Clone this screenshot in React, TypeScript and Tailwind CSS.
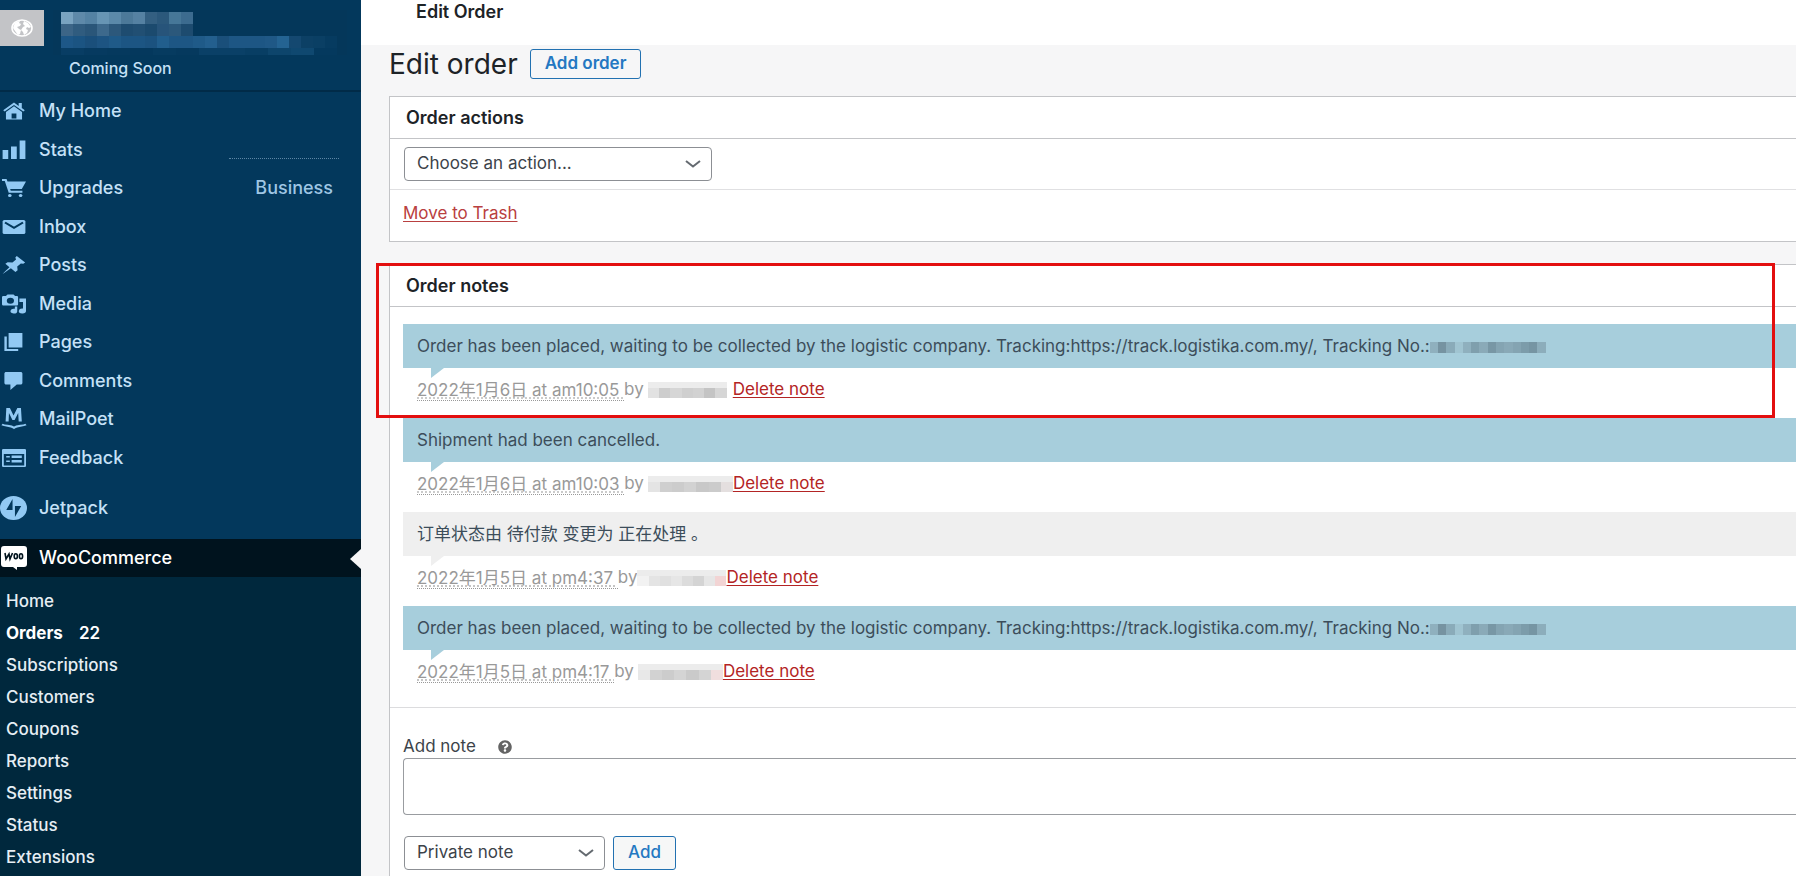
import { FaQuestionCircle } from "react-icons/fa";
import type { ReactNode } from "react";

type MenuEntry = { label: string; icon: ReactNode };

type Note = {
  id: number;
  text: string;
  trackingNo?: boolean;
  system?: boolean;
  date: string;
  author: string[];
  authorClass: string;
};

const menu: MenuEntry[] = [
  {
    label: "My Home",
    icon: (
      <>
        <path d="M10 1.5 1 9.2l1.2 1.4L10 4l7.8 6.6L19 9.2l-2.5-2.1V2h-2.6v2.9z" />
        <path d="M10 5.300 3.300 11v7.500h13.400V11zm-2 12.200v-5h4v5z" fillRule="evenodd" />
      </>
    ),
  },
  {
    label: "Stats",
    icon: <path d="M.5 10h4.700v9H.5zm7-3.500h4.800V19H7.500zm7.200-6h4.800V19h-4.800z" />,
  },
  {
    label: "Upgrades",
    icon: (
      <>
        <path d="M0 1h3.800l.8 2.500H20L16.500 11H6.800l.5 1.800h9.700v2H5.600L2.300 3H0z" />
        <circle cx="6.500" cy="17.500" r="1.500" />
        <circle cx="15.500" cy="17.500" r="1.500" />
      </>
    ),
  },
  {
    label: "Inbox",
    icon: (
      <>
        <rect x=".5" y="3" width="19" height="14" rx="1.500" />
        <path d="m2.500 5.500 7.500 5.300 7.500-5.300" fill="none" stroke="#03385c" strokeWidth="1.800" />
      </>
    ),
  },
  {
    label: "Posts",
    icon: (
      <path d="m12.300 1 7 6.500-1.600 1.300-2-.2-3 3 .3 3.700-1.800 1.700-3.800-3.700C5 15.300 2.500 17.600.5 19c1.400-2 3.700-4.600 5.700-6.800L2.800 8.800l1.900-1.600 4 .2 3-2.900-.6-2z" />
    ),
  },
  {
    label: "Media",
    icon: (
      <>
        <path
          d="M1.300 2h2L4.600.5h5L10.900 2h1.300c.7 0 1.200.5 1.200 1.200v7c0 .7-.5 1.300-1.200 1.300H1.300C.6 11.500 0 11 0 10.200v-7C0 2.500.6 2 1.300 2zM7 3.700a3 3 0 1 0 0 6 3 3 0 0 0 0-6z"
          fillRule="evenodd"
        />
        <path d="M14.500 4.500H20V17a3 2.500 0 1 1-2.500-2.500V8h-3z" />
        <path d="M12.700 12.500v4.700a2.800 2.400 0 1 1-2-2.400v-2.300z" />
      </>
    ),
  },
  {
    label: "Pages",
    icon: <path d="M5.500 1H17v14.500H5.500zM2 4.500h2v12.500H13.500V19H2z" />,
  },
  {
    label: "Comments",
    icon: <path d="M3.500 1h12C16.400 1 17 1.600 17 2.500v9.500c0 .9-.6 1.500-1.500 1.500h-3.200L7 19v-5.500H3.500C2.600 13.500 2 12.900 2 12V2.500C2 1.600 2.600 1 3.500 1z" />,
  },
  {
    label: "MailPoet",
    icon: (
      <>
        <path d="M3 12.500 3.600-1h3l3 7.500 3.200-7.500h3l.7 13.500h-2.600l-.4-8.500-3 7h-1.800l-2.900-7-.3 8.500z" />
        <path d="M0 15.500c3.500 2 7 .3 10 3.300 3-3 6.500-1.300 10-3.300" fill="none" stroke="currentColor" strokeWidth="2" />
      </>
    ),
  },
  {
    label: "Feedback",
    icon: (
      <>
        <rect x="0" y="1" width="20" height="18" rx="1" />
        <path d="M1.500 6h17v11.500h-17z" fill="#03385c" />
        <path d="M3.500 8h3v1.500h-3zm0 4.500h3V14h-3zM8 7.500h8.500V10H8zm0 4.500h8.500v2.500H8z" />
      </>
    ),
  },
];

const submenu = ["Home", "Orders", "Subscriptions", "Customers", "Coupons", "Reports", "Settings", "Status", "Extensions"];

const placed =
  "Order has been placed, waiting to be collected by the logistic company. Tracking:https://track.logistika.com.my/, Tracking No.:";

const notes: Note[] = [
  {
    id: 1,
    text: placed,
    trackingNo: true,
    date: "2022年1月6日 at am10:05 ",
    author: ["#e2e2e2", "#cdcdcd", "#d6d6d6", "#cfcfcf", "#d2d2d2", "#c4c4c4", "#d6d6d6"],
    authorClass: "ml-1 mr-[6px] w-[79px]",
  },
  {
    id: 2,
    text: "Shipment had been cancelled.",
    date: "2022年1月6日 at am10:03 ",
    author: ["#e4e4e4", "#cfcfcf", "#cccccc", "#d2d2d2", "#c8c8c8", "#cbcbcb", "#e4dfdf"],
    authorClass: "ml-1 w-[85px]",
  },
  {
    id: 3,
    text: "订单状态由 待付款 变更为 正在处理 。",
    system: true,
    date: "2022年1月5日 at pm4:37 ",
    author: ["#f2f2f2", "#e4e4e4", "#e0e0e0", "#e6e6e6", "#dcdcdc", "#d4d4d4", "#e6e6e6", "#f2d4d4"],
    authorClass: "w-[89px]",
  },
  {
    id: 4,
    text: placed,
    trackingNo: true,
    date: "2022年1月5日 at pm4:17 ",
    author: ["#e8e8e8", "#d2d2d2", "#cccccc", "#d4d4d4", "#cacaca", "#d4d4d4", "#f0dede"],
    authorClass: "ml-1 w-[85px]",
  },
];

// pixelated placeholders for redacted text
const siteName = ["#79a3c0", "#5e89a9", "#5482a3", "#6795b4", "#5b89a9", "#4c7999", "#5581a2", "#335f81", "#2b587b", "#467798", "#3c6b8f"];
const siteNameLower = ["#3c6587", "#305c7f", "#2a5679", "#3d698c", "#2c587b", "#1e4c70", "#214f73", "#1b4a6e", "#27547a", "#2b587b", "#1d4b6f"];
const siteUrl = ["#1d5787", "#1b5482", "#1a4f7b", "#1d5482", "#1f5a88", "#1c5583", "#1c5583", "#1b527f", "#215e8d", "#1d5684", "#1d5684", "#1f5a88", "#235f8e", "#1a4f7a", "#1d5684", "#1d5684", "#1d5684", "#1f5886", "#246392", "#144870", "#0c4065", "#0a3f64", "#063b60"];
const siteUrlLower = ["#083d64", "#063a60", "#05395e", "#04385d", "#063b60", "#05395e", "#0a4067", "#0a4067", "#083e64", "#0d456c", "#0f4870", "#04395e"];
const trackingDigits = ["#8fb0be", "#7693a1", "#8aabb9", "#a0c4d1", "#8fb0be", "#7f9fad", "#8aaab8", "#7897a5", "#84a4b2", "#89a9b7", "#84a4b2", "#7c9caa", "#7695a3", "#8cadbb"];

function Mosaic({ colors, className }: { colors: string[]; className: string }) {
  return (
    <span aria-hidden="true" className={`flex ${className}`}>
      {colors.map((color, i) => (
        <span key={i} className="flex-1" style={{ backgroundColor: color }} />
      ))}
    </span>
  );
}

function MenuIcon({ children }: { children: ReactNode }) {
  return (
    <svg viewBox="0 0 20 20" preserveAspectRatio="none" fill="currentColor" className="h-5 w-6 shrink-0 overflow-visible text-[#92c9f3]">
      {children}
    </svg>
  );
}

function Chevron() {
  return (
    <svg viewBox="0 0 16 10" fill="none" stroke="currentColor" strokeWidth="2" className="pointer-events-none absolute right-[11px] h-[10px] w-4 text-[#646a70]">
      <path d="m1 2 7 5.500L15 2" />
    </svg>
  );
}

function Sidebar() {
  return (
    <aside className="w-[361px] shrink-0 bg-[#03385c] text-lg font-medium text-[#c5e1f7]">
      <div className="h-[92px] border-b-2 border-[#012b48] pt-[10px]">
        <div className="flex gap-[9px]">
          <div className="flex h-9 w-11 items-center justify-center bg-[#c3c4c7]">
            <svg viewBox="0 0 22 18" preserveAspectRatio="none" className="h-[18px] w-[22px]">
              <ellipse cx="11" cy="9" rx="10" ry="8" fill="#c3c4c7" stroke="#fff" strokeWidth="1.600" />
              <path d="M3 6c1-3 4-4 6-4l-1 2 2 1-1 2-3 1 2 2 2 1-1 4-2 1-3-4-2-3zM13 2l4 2 3 4-2 1-2-1-1 2 2 1-1 3-3 2-1-3-2-2 2-3 2-1-2-2z" fill="#fff" />
            </svg>
          </div>
          <div className="h-[45px] w-[294px] bg-[#04375a] pt-[2px] pl-2">
            <Mosaic colors={siteName} className="h-3 w-[132px]" />
            <Mosaic colors={siteNameLower} className="h-3 w-[132px]" />
            <Mosaic colors={siteUrl} className="h-3 w-[276px]" />
            <Mosaic colors={siteUrlLower} className="h-[7px] w-[276px]" />
          </div>
        </div>
        <p className="mt-[3px] ml-[69px] text-base leading-5">Coming Soon</p>
      </div>

      <nav>
        <ul className="flex h-[385px] flex-col">
          {menu.map((item) => (
            <li key={item.label} className="flex-1">
              <a href="#" className="flex h-full items-center gap-[13px] pl-[2px]">
                <MenuIcon>{item.icon}</MenuIcon>
                {item.label}
                {item.label === "Upgrades" && (
                  <span className="relative mr-7 ml-auto text-[#9fc6e4]">
                    Business
                    <span className="absolute -top-4 -right-[6px] w-[110px] border-t border-dotted border-[#5d86a5]" />
                  </span>
                )}
              </a>
            </li>
          ))}
        </ul>
        <a href="#" className="my-3 flex h-[38px] items-center gap-3">
          <svg viewBox="0 0 28 24" preserveAspectRatio="none" className="h-6 w-[27px]">
            <ellipse cx="14" cy="12" rx="14" ry="12" fill="#92c9f3" />
            <path d="M13 3v11H6.500zM15.500 21V10h6.500z" fill="#03385c" />
          </svg>
          Jetpack
        </a>
        <a href="#" className="relative flex h-[38px] items-center gap-3 bg-[#00131e] text-white">
          <svg viewBox="0 0 27 24" className="h-6 w-[27px]">
            <path d="M4 0h20c2 0 3 1 3 3v15c0 2-1 3-3 3h-7v3l-4-3H4c-2 0-3-1-3-3V3c0-2 1-3 3-3z" fill="#fff" />
            <path d="m5 7 1 6 3-5 1 5 2.500-6" fill="none" stroke="#00131e" strokeWidth="1.600" />
            <ellipse cx="15.800" cy="10.300" rx="1.600" ry="2.500" fill="none" stroke="#00131e" strokeWidth="1.600" />
            <ellipse cx="21" cy="10.300" rx="1.600" ry="2.500" fill="none" stroke="#00131e" strokeWidth="1.600" />
          </svg>
          WooCommerce
          <span className="absolute top-[10px] right-0 border-y-[10px] border-r-[11px] border-y-transparent border-r-[#f6f6f7]" />
        </a>
        <ul className="bg-[#00283d] pt-2 pb-1 text-[17px] text-[#e6eef4]">
          {submenu.map((label) => (
            <li key={label}>
              <a href="#" className={`flex h-8 items-center gap-4 pl-[6px] ${label === "Orders" ? "font-bold text-white" : ""}`}>
                {label}
                {label === "Orders" && <span className="font-semibold">22</span>}
              </a>
            </li>
          ))}
        </ul>
      </nav>
    </aside>
  );
}

function OrderNote({ note }: { note: Note }) {
  return (
    <li>
      <div className={`relative flex h-11 items-center pt-[2px] pl-[14px] text-[#3c4d5a] ${note.system ? "bg-[#efefef]" : "bg-[#a7cedc]"}`}>
        <p className="whitespace-nowrap">{note.text}</p>
        {note.trackingNo && <Mosaic colors={trackingDigits} className="h-[11px] w-[116px] shrink-0" />}
        <span
          className={`absolute top-full left-7 border-t-[10px] border-r-[13px] border-r-transparent ${note.system ? "border-t-[#efefef]" : "border-t-[#a7cedc]"}`}
        />
      </div>
      <p className="mt-[10px] mb-4 flex h-6 items-center pl-[14px] whitespace-pre text-[#999]">
        <abbr className="border-b border-dotted border-[#999] leading-5 underline decoration-[#bbb] decoration-dotted underline-offset-2">
          {note.date}
        </abbr>
        by
        <Mosaic colors={note.author} className={`h-4 bg-[#ececec] pt-[6px] ${note.authorClass}`} />
        <a href="#" className="text-[#b32424] underline underline-offset-2">
          Delete note
        </a>
      </p>
    </li>
  );
}

export default function App() {
  return (
    <div className="flex min-h-screen overflow-hidden bg-[#f6f6f7] font-['Inter','Noto_Sans_CJK_SC',sans-serif] text-[17px] text-[#3c434a]">
      <Sidebar />
      <main className="min-w-0 flex-1">
        <div className="h-[45px] bg-white pl-[55px] text-lg leading-6 font-semibold text-[#1d2327]">Edit Order</div>
        <div className="pl-7">
          <div className="flex h-[51px] items-center gap-3 pt-[2px] pb-4">
            <h1 className="text-[28px] leading-8 text-[#1d2327]">Edit order</h1>
            <button className="h-[30px] rounded-[3px] border border-[#2271b1] px-[14px] font-semibold text-[#2478c2]">Add order</button>
          </div>

          <section className="h-[146px] border border-r-0 border-[#c3c4c7] bg-white">
            <h2 className="h-[42px] border-b border-[#c3c4c7] pl-4 text-lg leading-[42px] font-semibold text-[#1d2327]">Order actions</h2>
            <div className="border-b border-[#e0e0e2] py-2 pl-[14px]">
              <label className="relative flex w-[308px] items-center">
                <select aria-label="Order action" className="h-[34px] w-full appearance-none rounded-[4px] border border-[#8c8f94] bg-white pl-3">
                  <option>Choose an action...</option>
                </select>
                <Chevron />
              </label>
            </div>
            <a href="#" className="mt-[11px] ml-[13px] inline-block leading-6 text-[#b94040] underline underline-offset-2">
              Move to Trash
            </a>
          </section>

          <section className="relative mt-[22px] border border-r-0 border-[#c3c4c7] bg-white">
            <h2 className="h-[42px] border-b border-[#c3c4c7] pl-4 text-lg leading-[42px] font-semibold text-[#1d2327]">Order notes</h2>
            <ul className="border-b border-[#dcdcde] pt-[17px] pb-[7px] pl-[13px]">
              {notes.map((note) => (
                <OrderNote key={note.id} note={note} />
              ))}
            </ul>
            <div className="pt-7 pl-[13px]">
              <div className="flex h-[22px] items-center gap-[22px]">
                <label htmlFor="order-note">Add note</label>
                <FaQuestionCircle className="size-[14px] text-[#646464]" />
              </div>
              <textarea id="order-note" className="block h-[57px] w-full resize-none rounded-l-[4px] border border-r-0 border-[#999ca0] bg-white" />
              <div className="flex items-center gap-2 py-[21px] pl-px">
                <label className="relative flex w-[201px] items-center">
                  <select aria-label="Note type" className="h-[34px] w-full appearance-none rounded-[4px] border border-[#8c8f94] bg-white pl-3">
                    <option>Private note</option>
                  </select>
                  <Chevron />
                </label>
                <button className="h-[34px] rounded-[3px] border border-[#2271b1] bg-[#f6f7f7] px-[14px] font-medium text-[#2478c2]">Add</button>
              </div>
            </div>
            <div className="pointer-events-none absolute -top-[2px] right-[21px] -left-[14px] h-[155px] border-[3px] border-[#e30f0f]" />
          </section>
        </div>
      </main>
    </div>
  );
}
